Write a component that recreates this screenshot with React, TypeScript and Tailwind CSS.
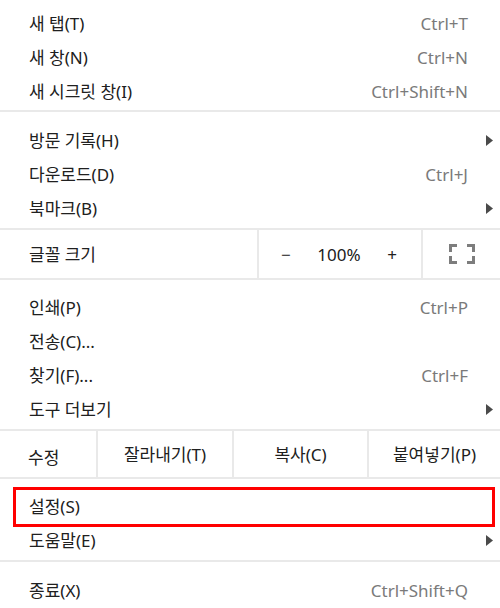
import { ReactNode } from 'react'

interface ItemProps {
    label: string
    shortcut?: string
    submenu?: boolean
}

function Arrow() {
    return (
        <svg width="7" height="11" viewBox="0 0 7 11" className="shrink-0">
            <path d="M0 0 L7 5.5 L0 11 Z" fill="#4a4a4a" />
        </svg>
    )
}

function Item({ label, shortcut, submenu }: ItemProps) {
    return (
        <div
            className={`flex h-[34px] items-center justify-between pl-[29px] ${
                submenu ? 'pr-[7px]' : 'pr-[32px]'
            }`}
        >
            <span className="text-[17px] leading-none text-[#202020]">{label}</span>
            {shortcut && <span className="text-[17px] leading-none text-[#7a7a7a]">{shortcut}</span>}
            {submenu && <Arrow />}
        </div>
    )
}

function Separator() {
    return <div className="h-[2px] bg-[#e9e9e9]" />
}

function VDivider() {
    return <div className="w-[2px] self-stretch bg-[#e9e9e9]" />
}

function Section({ children, className }: { children: ReactNode; className: string }) {
    return <div className={className}>{children}</div>
}

function FullscreenIcon() {
    return (
        <svg width="26" height="20" viewBox="0 0 26 20" fill="none" stroke="#7d7d7d" strokeWidth="3">
            <path d="M1.5 8 V1.5 H8" />
            <path d="M18 1.5 H24.5 V8" />
            <path d="M24.5 12 V18.5 H18" />
            <path d="M8 18.5 H1.5 V12" />
        </svg>
    )
}

export default function App() {
    return (
        <div className="w-[500px] h-[608px] overflow-hidden bg-white font-['Noto_Sans','Noto_Sans_CJK_KR',sans-serif]">
            <Section className="pt-[6px] pb-[2px]">
                <Item label="새 탭(T)" shortcut="Ctrl+T" />
                <Item label="새 창(N)" shortcut="Ctrl+N" />
                <Item label="새 시크릿 창(I)" shortcut="Ctrl+Shift+N" />
            </Section>
            <Separator />
            <Section className="pt-[11px] pb-[3px]">
                <Item label="방문 기록(H)" submenu />
                <Item label="다운로드(D)" shortcut="Ctrl+J" />
                <Item label="북마크(B)" submenu />
            </Section>
            <Separator />
            <div className="flex h-[48px]">
                <div className="flex w-[257px] items-center pl-[29px] text-[17px] leading-none text-[#202020]">
                    글꼴 크기
                </div>
                <VDivider />
                <div className="flex w-[162px] items-center justify-between pl-[22px] pr-[24px] text-[17px] leading-none text-[#202020]">
                    <span>−</span>
                    <span>100%</span>
                    <span>+</span>
                </div>
                <VDivider />
                <div className="flex flex-1 items-center justify-center">
                    <FullscreenIcon />
                </div>
            </div>
            <Separator />
            <Section className="pt-[10px] pb-[3px]">
                <Item label="인쇄(P)" shortcut="Ctrl+P" />
                <Item label="전송(C)..." />
                <Item label="찾기(F)..." shortcut="Ctrl+F" />
                <Item label="도구 더보기" submenu />
            </Section>
            <Separator />
            <div className="flex h-[46px] text-[17px] leading-none text-[#202020]">
                <div className="flex w-[96px] items-center pl-[28px] pt-[6px]">수정</div>
                <VDivider />
                <div className="flex w-[134px] items-center justify-center">잘라내기(T)</div>
                <VDivider />
                <div className="flex w-[133px] items-center justify-center">복사(C)</div>
                <VDivider />
                <div className="flex flex-1 items-center justify-center">붙여넣기(P)</div>
            </div>
            <Separator />
            <Section className="pt-[10px] pb-[3px]">
                <div className="relative">
                    <Item label="설정(S)" />
                    <div className="absolute left-[13px] right-[5px] -top-[2px] -bottom-[4px] border-[3px] border-[#ff0000]" />
                </div>
                <Item label="도움말(E)" submenu />
            </Section>
            <Separator />
            <Section className="pt-[11px]">
                <Item label="종료(X)" shortcut="Ctrl+Shift+Q" />
            </Section>
        </div>
    )
}
